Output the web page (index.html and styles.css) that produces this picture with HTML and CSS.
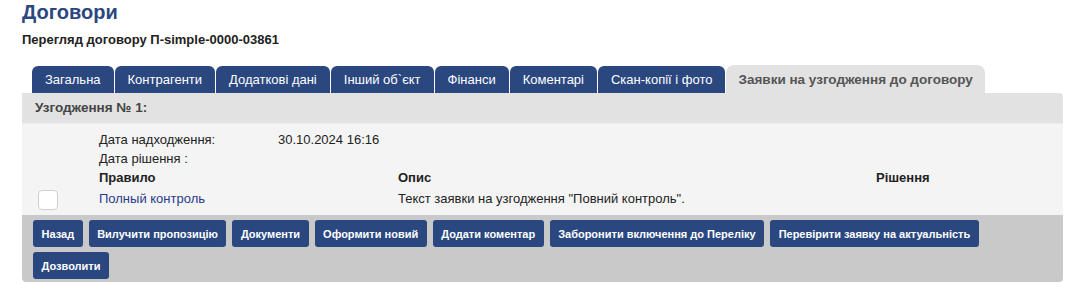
FILE: index.html
```html
<!DOCTYPE html>
<html lang="uk">
  <head>
    <meta charset="UTF-8" />
    <meta name="viewport" content="width=device-width, initial-scale=1.0" />
    <title>Договори</title>
    <link rel="stylesheet" href="styles.css">
  </head>
  <body>
    <h1 class="page_title">Договори</h1>
    <h2 class="page_sub">Перегляд договору П-simple-0000-03861</h2>

    <ul class="tabs">
      <li><a href="#">Загальна</a></li>
      <li><a href="#">Контрагенти</a></li>
      <li><a href="#">Додаткові дані</a></li>
      <li><a href="#">Інший об`єкт</a></li>
      <li><a href="#">Фінанси</a></li>
      <li><a href="#">Коментарі</a></li>
      <li><a href="#">Скан-копії і фото</a></li>
      <li class="active"><a href="#">Заявки на узгодження до договору</a></li>
    </ul>

    <section class="panel">
      <div class="panel_head">Узгодження № 1:</div>

      <div class="panel_body">
        <div class="info_row">
          <span>Дата надходження:</span>
          <span>30.10.2024 16:16</span>
        </div>
        <div class="info_row">
          <span>Дата рішення :</span>
          <span></span>
        </div>

        <div class="rules">
          <div></div>
          <div class="th">Правило</div>
          <div class="th">Опис</div>
          <div class="th">Рішення</div>

          <div class="td"><span class="check"></span></div>
          <div class="td"><a href="#" class="rule_link">Полный контроль</a></div>
          <div class="td">Текст заявки на узгодження "Повний контроль".</div>
          <div class="td"></div>
        </div>
      </div>

      <div class="panel_actions">
        <div class="btn_row">
          <button>Назад</button>
          <button>Вилучити пропозицію</button>
          <button>Документи</button>
          <button>Оформити новий</button>
          <button>Додати коментар</button>
          <button>Заборонити включення до Переліку</button>
          <button>Перевірити заявку на актуальність</button>
        </div>
        <div class="btn_row">
          <button>Дозволити</button>
        </div>
      </div>
    </section>
  </body>
</html>
```

FILE: styles.css
```css
* {
  box-sizing: border-box;
}
body {
  margin: 0;
  padding: 0 12px 0 22px;
  font-family: "Liberation Sans", Arial, sans-serif;
  font-size: 13px;
  color: #222;
  background: #fff;
}
h1.page_title {
  margin: 0;
  padding-top: 1px;
  font-size: 20px;
  line-height: 22px;
  color: #2b4780;
}
h2.page_sub {
  margin: 0;
  padding-top: 9px;
  font-size: 13px;
  line-height: 16px;
  color: #222;
}
ul.tabs {
  list-style: none;
  margin: 17px 0 0 0;
  padding: 0 0 0 10px;
  display: flex;
  align-items: flex-end;
  gap: 1px;
  height: 28px;
}
ul.tabs > li {
  background: #2b4780;
  border-radius: 6px 6px 0 0;
  height: 27px;
}
ul.tabs > li a {
  display: block;
  padding: 0 13px;
  line-height: 27px;
  color: #fff;
  text-decoration: none;
  font-size: 13px;
}
ul.tabs > li.active {
  background: #e2e2e2;
  height: 28px;
  border-radius: 8px 8px 0 0;
}
ul.tabs > li.active a {
  color: #555;
  font-weight: bold;
  font-size: 13.5px;
  padding: 0 12px;
  line-height: 30px;
}
section.panel {
  width: 1041px;
  border-radius: 0 4px 4px 4px;
  overflow: hidden;
}
div.panel_head {
  background: #e2e2e2;
  height: 30px;
  line-height: 29px;
  padding-left: 13px;
  font-weight: bold;
  font-size: 13.5px;
  color: #444;
}
div.panel_body {
  background: #f4f4f4;
  border-top: 1px solid #efefef;
  padding: 6px 0 5px 0;
}
div.info_row {
  display: grid;
  grid-template-columns: 179px auto;
  padding-left: 77px;
  line-height: 19px;
}
div.rules {
  display: grid;
  grid-template-columns: 77px 299px 478px 1fr;
  line-height: 20px;
}
div.rules .th {
  font-weight: bold;
}
div.rules .td {
  display: flex;
  align-items: center;
  height: 22px;
}
span.check {
  display: block;
  width: 20px;
  height: 20px;
  margin: 1px 0 0 16px;
  background: #fff;
  border: 1px solid #cfcfcf;
  border-radius: 4px;
}
a.rule_link {
  color: #2b3a8c;
  text-decoration: none;
}
div.panel_actions {
  background: #c9c9c9;
  padding: 5px 8px 4px 11px;
  display: flex;
  flex-direction: column;
  gap: 5px;
  height: 67px;
}
div.btn_row {
  display: flex;
  gap: 6px;
}
div.btn_row button {
  background: #2b4780;
  color: #fff;
  border: 0;
  border-radius: 3px;
  height: 27px;
  padding: 0 8.5px;
  font-family: "Liberation Sans", Arial, sans-serif;
  font-size: 11px;
  font-weight: bold;
  cursor: pointer;
}
```
